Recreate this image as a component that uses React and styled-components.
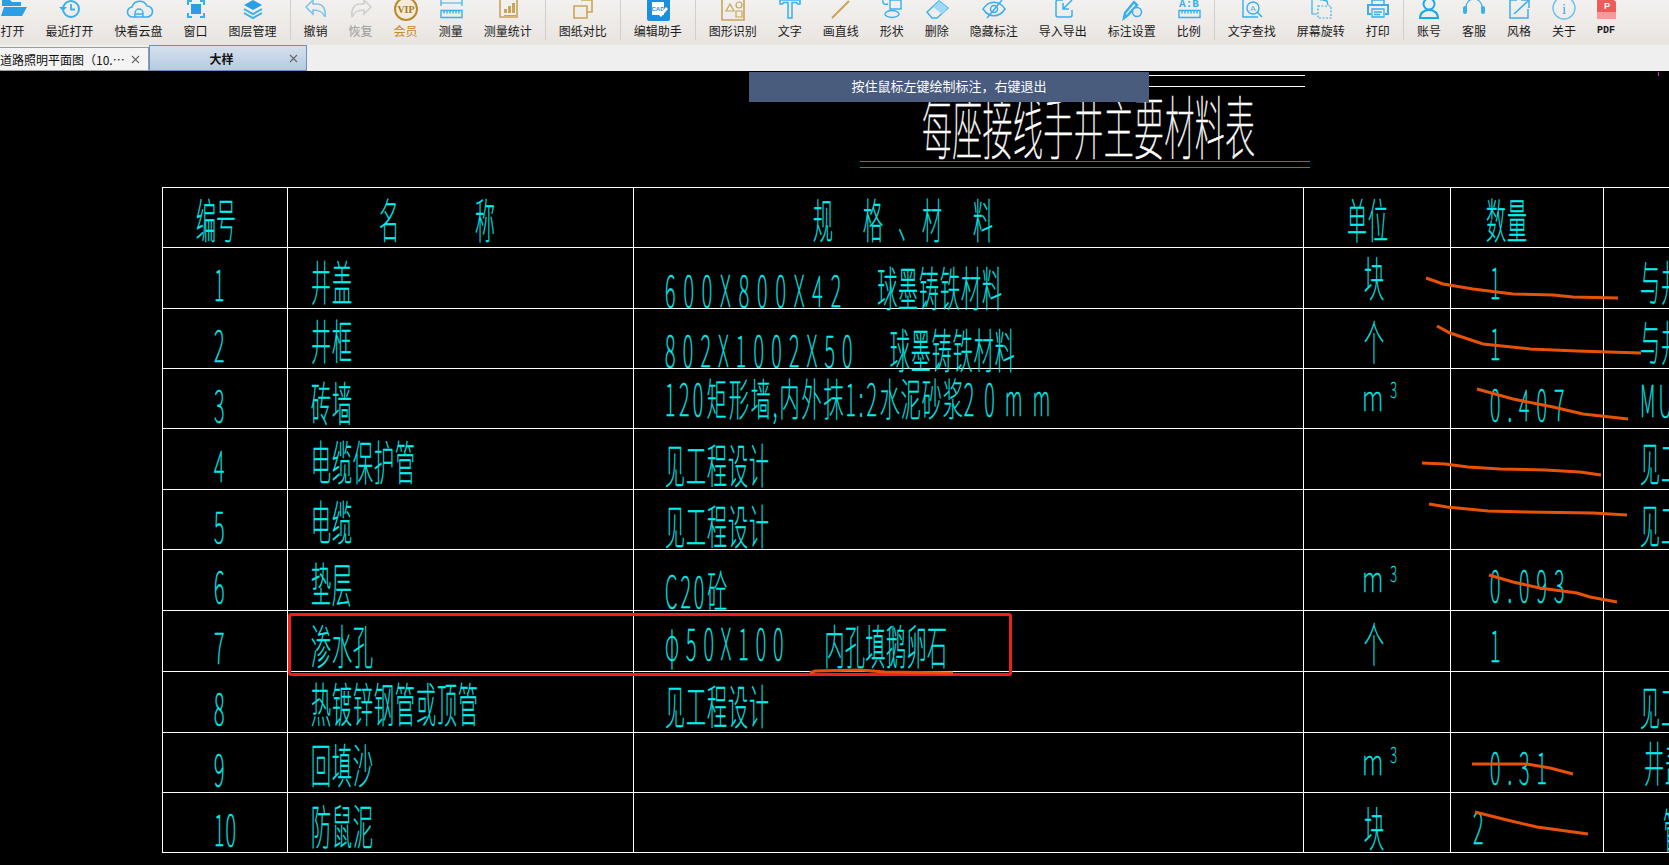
import styled, { createGlobalStyle } from "styled-components";

const BLUE = "#38b0ee";
const GOLD = "#c9a558";
const CJK = `"Noto Sans CJK SC", "Liberation Sans", sans-serif`;

const Global = createGlobalStyle`
  html, body { margin: 0; padding: 0; height: 100%; background: #000; overflow: hidden; }
  #root { height: 100%; }
`;

const Page = styled.div`
  display: flex;
  flex-direction: column;
  height: 865px;
  overflow: hidden;
  font-family: ${CJK};
`;

/* ---------- toolbar ---------- */
const Toolbar = styled.div`
  display: flex;
  flex: none;
  height: 45px;
  overflow: hidden;
  background: linear-gradient(#f3f1ef, #e8e4e0);
`;
const ToolRow = styled.div`
  display: flex;
  margin-left: -10px;
  height: 40px;
`;
const Tool = styled.div`
  display: flex;
  flex: none;
  flex-direction: column;
  align-items: center;
  padding: 0 10.5px;
`;
const ToolIcon = styled.svg`
  display: block;
  flex: none;
  width: 30px;
  height: 24px;
  margin: -3px -8px 0;
`;
const ToolLabel = styled.span`
  font-size: ${(p) => (p.$mono ? 10 : 12)}px;
  font-family: ${(p) => (p.$mono ? `"Liberation Mono", monospace` : "inherit")};
  font-weight: ${(p) => (p.$mono ? 700 : 400)};
  line-height: 14px;
  margin-top: 3px;
  white-space: nowrap;
  color: ${(p) => p.$color || "#1c1c1c"};
`;
const ToolSep = styled.div`
  flex: none;
  width: 1px;
  height: 40px;
  margin: 0 2px 0 3px;
  background: #d2cfcb;
`;

/* ---------- tabs ---------- */
const TabBar = styled.div`
  display: flex;
  flex: none;
  align-items: flex-end;
  height: 26px;
  background: #efefef;
`;
const Tab = styled.div`
  display: flex;
  align-items: center;
  box-sizing: border-box;
  width: ${(p) => (p.$active ? 158 : 149)}px;
  height: ${(p) => (p.$active ? 26 : 24)}px;
  padding: 0 8px 0 ${(p) => (p.$active ? 8 : 0)}px;
  font-size: 12px;
  white-space: nowrap;
  color: #111;
  background: ${(p) => (p.$active ? "linear-gradient(#d5e0ec, #b6cbe2)" : "#f4f4f4")};
  border: 1px solid ${(p) => (p.$active ? "#6a90c4" : "#9b9b9b")};
  border-left-width: ${(p) => (p.$active ? 1 : 0)}px;
`;
const TabTitle = styled.span`
  flex: 1;
  overflow: hidden;
  font-weight: ${(p) => (p.$active ? 700 : 400)};
  text-align: ${(p) => (p.$active ? "center" : "left")};
`;
const TabClose = styled.svg`
  flex: none;
  width: 9px;
  height: 9px;
  margin-left: 4px;
`;

/* ---------- drawing ---------- */
const Canvas = styled.div`
  position: relative;
  flex: 1;
  overflow: hidden;
  background: #000;
`;
const Heading = styled.div`
  display: flex;
  flex-direction: column;
  width: 450px;
  margin-left: 860px;
  padding-top: 4px;
`;
const Rule = styled.div`
  flex: none;
  height: 1px;
  margin-left: ${(p) => p.$x || 0}px;
  margin-right: ${(p) => p.$end || 0}px;
  margin-bottom: ${(p) => p.$after || 0}px;
  background: ${(p) => p.$color};
`;
const TitleBox = styled.div`
  height: 74px;
`;
const Line = styled.div`
  display: inline-block;
  flex: none;
  margin-left: ${(p) => p.$x || 0}px;
  margin-top: ${(p) => p.$y || 0}px;
  height: ${(p) => p.$size || 20}px;
  font-weight: 100;
  font-size: ${(p) => p.$size || 20}px;
  line-height: 1;
  white-space: pre;
  letter-spacing: ${(p) => p.$ls ?? 1}px;
  color: ${(p) => p.$color || "#00f0f0"};
  transform-origin: 0 0;
  transform: scaleY(${(p) => p.$sy || 2.35});
  -webkit-text-stroke: ${(p) => p.$thick ?? 0.25}px currentColor;
`;
const Run = styled.span`
  letter-spacing: ${(p) => p.$ls}px;
`;
const Sheet = styled.div`
  display: grid;
  grid-template-columns: 125px 346px 670px 147px 153px 66px;
  grid-template-rows: 60px 61px 60px 60px 61px 60px 61px 61px 61px 60px 60px;
  width: 1507px;
  margin-left: 162px;
  border-top: 1px solid #fff;
  border-left: 1px solid #fff;
  box-sizing: border-box;
`;
const Cell = styled.div`
  display: flex;
  align-items: flex-start;
  min-width: 0;
  box-sizing: border-box;
  border-right: 1px solid #fff;
  border-bottom: 1px solid #fff;
`;
const Banner = styled.div`
  position: absolute;
  top: 1px;
  left: 749px;
  width: 400px;
  height: 30px;
  display: flex;
  align-items: center;
  justify-content: center;
  padding-bottom: 3px;
  box-sizing: border-box;
  font-size: 13px;
  color: #fff;
  background: #495c7e;
`;
const Highlight = styled.div`
  position: absolute;
  left: 288px;
  top: 542px;
  width: 724px;
  height: 63px;
  box-sizing: border-box;
  border: 3px solid #ee1f1c;
  border-radius: 3px;
`;
const Marks = styled.svg`
  position: absolute;
  left: 0;
  top: 0;
  width: 1669px;
  height: 794px;
`;
const Tick = styled.div`
  position: absolute;
  top: 1px;
  left: 1658px;
  width: 1px;
  height: 4px;
  background: #e020c8;
`;

function Stroked({ d, w = 2 }) {
  return <path d={d} fill="none" stroke={BLUE} strokeWidth={w} />;
}
function Gold({ d, w = 1.6 }) {
  return <path d={d} fill="none" stroke={GOLD} strokeWidth={w} />;
}

const ICONS = {
  open: (
    <>
      <path d="M4 3h8l2 2h9v4H4z" fill="#2a9fe6" />
      <path d="M6 10h23l-5 9H3z" fill="#2a9fe6" />
    </>
  ),
  recent: (
    <>
      <circle cx="16" cy="12" r="8" fill="none" stroke={BLUE} strokeWidth="2" />
      <path d="M16 7v5.5h4" fill="none" stroke={BLUE} strokeWidth="1.8" />
      <path d="M4 10h8l-4 4z" fill={BLUE} />
    </>
  ),
  cloud: (
    <>
      <Stroked w={1.6} d="M9 20a5 5 0 0 1-1-10a8 8 0 0 1 15-1a5.500 5.500 0 0 1 0 11z" />
      <Stroked w={1.4} d="M11 20v-4a4 4 0 0 1 8 0v4M11 17h8" />
    </>
  ),
  window: (
    <>
      <Stroked d="M7 8V4h4M19 4h4v4M23 16v4h-4M11 20H7v-4" />
      <rect x="10" y="7" width="10" height="10" fill="#2a9fe6" />
    </>
  ),
  layers: (
    <>
      <path d="M15 3l9 5-9 5-9-5z" fill="#2a9fe6" />
      <Stroked d="M6 12l9 5 9-5M6 16l9 5 9-5" />
    </>
  ),
  undo: <path d="M5 10l7-7v4h4c6 0 9 5 8 13-2-5-5-7-12-7v4z" fill="none" stroke="#7cc5ec" strokeWidth="1.6" />,
  redo: <path d="M25 10l-7-7v4h-4c-6 0-9 5-8 13 2-5 5-7 12-7v4z" fill="none" stroke="#cfcfcf" strokeWidth="1.6" />,
  vip: (
    <>
      <circle cx="15" cy="12" r="11" fill="#f4ecd9" stroke="#b98a32" strokeWidth="2" />
      <text x="15" y="16" textAnchor="middle" fontFamily="Liberation Serif" fontWeight="700" fontSize="10" fill="#a8781f">VIP</text>
    </>
  ),
  ruler: (
    <>
      <Stroked w={1.2} d="M5 3v6M26 3v6M5 6h21" />
      <Stroked w={1.4} d="M5 13.500h21v7H5zM8 13.500v3M11 13.500v3M14 13.500v3M17 13.500v3M20 13.500v3M23 13.500v3" />
    </>
  ),
  stats: (
    <>
      <Gold d="M7 0v20h17V0" />
      <path d="M11 16h3v-4h-3zM15 16h3V9h-3zM19 16h3V6h-3z" fill={GOLD} />
      <Gold w={1} d="M11 18.500h12" />
    </>
  ),
  compare: (
    <>
      <Gold d="M13 3h11v12H19" />
      <Gold d="M6 9h13v12H6z" />
    </>
  ),
  helper: (
    <>
      <rect x="4" y="0" width="23" height="24" rx="2" fill="#1c8fdc" />
      <rect x="9" y="5" width="12" height="13" fill="#fff" />
      <text x="15" y="14" textAnchor="middle" fontFamily="Liberation Sans" fontWeight="700" fontSize="6" fill="#1c8fdc">CAD</text>
      <path d="M16 18l7-8 2 2-7 8z" fill="#fff" />
    </>
  ),
  shapes: (
    <>
      <Gold d="M4 0h22v23H4z" />
      <path d="M8 14l4-7 4 7z" fill="none" stroke={GOLD} strokeWidth="1.2" />
      <circle cx="21" cy="8" r="3" fill="none" stroke={GOLD} strokeWidth="1.2" />
      <path d="M18 14h6v6h-6z" fill="none" stroke={GOLD} strokeWidth="1.2" />
    </>
  ),
  text: <Stroked w={1.5} d="M5 3h20v4h-2.500l-1-1.500H17V21h-4V5.500H8.500L7.500 7H5z" />,
  line: <path d="M6 21L23 4" stroke={GOLD} strokeWidth="2" />,
  shape: (
    <>
      <Stroked w={1.4} d="M13 3h11v9H13z" />
      <Stroked w={1.4} d="M6 3c-1 4 2 5 5 4" />
      <ellipse cx="15" cy="17" rx="7" ry="3.500" fill="none" stroke={BLUE} strokeWidth="1.4" />
    </>
  ),
  erase: (
    <>
      <Stroked w={1.4} d="M5 15L17 4l9 7-11 10h-5z" />
      <path d="M11 10l6-6 9 7-6 6z" fill="#9fd8f6" />
    </>
  ),
  hide: (
    <>
      <Stroked w={1.5} d="M4 12c6-9 16-9 22 0-6 9-16 9-22 0z" />
      <circle cx="15" cy="12" r="3.500" fill="none" stroke={BLUE} strokeWidth="1.5" />
      <Stroked w={1.5} d="M8 21L23 3" />
    </>
  ),
  io: (
    <>
      <Stroked w={1.5} d="M15 3H10a2 2 0 0 0-2 2v13a2 2 0 0 0 2 2h12a2 2 0 0 0 2-2v-5" />
      <Stroked w={1.5} d="M24 3l-9 9M15 6v6h6" />
    </>
  ),
  setting: (
    <>
      <Stroked w={2.5} d="M7 21l1-5 9-11 3 3-9 10z" />
      <circle cx="20" cy="15" r="4.500" fill="#eeeae7" stroke={BLUE} strokeWidth="1.500" />
    </>
  ),
  scale: (
    <>
      <text x="15" y="10" textAnchor="middle" fontFamily="Liberation Mono" fontWeight="700" fontSize="11" fill={BLUE}>A:B</text>
      <Stroked w={1.4} d="M5 13.500h21v7H5zM8 13.500v3M11 13.500v3M14 13.500v3M17 13.500v3M20 13.500v3M23 13.500v3" />
    </>
  ),
  find: (
    <>
      <Stroked w={1.4} d="M6 3v17h15" />
      <circle cx="16" cy="11" r="6" fill="none" stroke={BLUE} strokeWidth="1.400" />
      <text x="16" y="14" textAnchor="middle" fontFamily="Liberation Sans" fontSize="8" fill={BLUE}>A</text>
      <Stroked w={1.6} d="M20 15l5 5" />
    </>
  ),
  rotate: (
    <>
      <Stroked w={1.2} d="M6 3v14h5M14 3l4 0" />
      <path d="M12 9h13v12H12z" fill="none" stroke={BLUE} strokeWidth="1.200" strokeDasharray="2 1.500" />
      <Stroked w={1.4} d="M17 3l4 1 1 4" />
    </>
  ),
  print: (
    <>
      <Stroked w={1.5} d="M9 8V3h12v5" />
      <Stroked w={2} d="M8 17H5V8h20v9h-3" />
      <Stroked w={1.3} d="M9 12h12v8H9zM11 15h8M11 17.500h6" />
    </>
  ),
  account: (
    <>
      <circle cx="15" cy="7" r="5.500" fill="none" stroke="#10aeee" strokeWidth="2" />
      <path d="M6 21c0-5 4-8 9-8s9 3 9 8z" fill="none" stroke="#10aeee" strokeWidth="2" />
    </>
  ),
  service: (
    <>
      <Stroked w={1.2} d="M7 12V10a8 8 0 0 1 16 0v2" />
      <rect x="4" y="9" width="4" height="8" rx="2" fill={BLUE} />
      <rect x="22" y="9" width="4" height="8" rx="2" fill={BLUE} />
    </>
  ),
  style: (
    <>
      <Stroked w={1.500} d="M13 3H6v18h18v-9" />
      <Stroked w={1.500} d="M10 17L24 4M17 3h8v8" />
    </>
  ),
  about: (
    <>
      <circle cx="15" cy="11" r="11" fill="none" stroke="#6cc2ee" strokeWidth="1.4" />
      <text x="15" y="17" textAnchor="middle" fontFamily="Liberation Serif" fontSize="15" fill="#3da8e4">i</text>
    </>
  ),
  pdf: (
    <>
      <path d="M6 0h14l5 5v17H6z" fill="#ef5a5a" />
      <path d="M6 15h19v7H6z" fill="#f49a9a" />
      <text x="13" y="12" fontFamily="Liberation Sans" fontWeight="700" fontSize="9" fill="#fff">P</text>
    </>
  ),
};

const TOOLS = [
  ["打开", "open"], ["最近打开", "recent"], ["快看云盘", "cloud"], ["窗口", "window"], ["图层管理", "layers"], null,
  ["撤销", "undo"], ["恢复", "redo", "#9a9a9a"], ["会员", "vip", "#c88a2a"], ["测量", "ruler"], ["测量统计", "stats"], null,
  ["图纸对比", "compare"], null,
  ["编辑助手", "helper"], null,
  ["图形识别", "shapes"], ["文字", "text"], ["画直线", "line"], ["形状", "shape"], ["删除", "erase"], ["隐藏标注", "hide"], ["导入导出", "io"], ["标注设置", "setting"], ["比例", "scale"], null,
  ["文字查找", "find"], ["屏幕旋转", "rotate"], ["打印", "print"], null,
  ["账号", "account"], ["客服", "service"], ["风格", "style"], ["关于", "about"],
];

function CloseX() {
  return (
    <TabClose viewBox="0 0 9 9">
      <path d="M1 1l7 7M8 1L1 8" stroke="#666" strokeWidth="1.1" />
    </TabClose>
  );
}

// chinese text: taller stretch
const Text = ({ x, y, ls, children, ...rest }) => (
  <Line $x={x} $y={y - 3} $ls={ls} {...rest}>{children}</Line>
);
// digits and latin: shorter stretch
const Num = ({ x, y, ls, children }) => (
  <Line $x={x} $y={y - 3} $ls={ls} $sy={2.2}>{children}</Line>
);

const Cube = ({ top = 12 }) => (
  <>
    <Line $x={58} $y={9} $size={24} $sy={1.5} $ls={0}>m</Line>
    <Line $x={7} $y={top - 3} $size={13} $sy={1.7} $ls={0} $thick={0.15}>3</Line>
  </>
);

const ROWS = [
  { no: "1", name: "井盖", nameY: 13, unit: <Text x={60} y={9}>块</Text>, qty: <Num x={39} y={14}>1</Num>, last: <Text x={36} y={13}>与井盖</Text>,
    spec: <><Num x={31} y={22} ls={8}>600X800X42</Num><Text x={28} y={19}>球墨铸铁材料</Text></> },
  { no: "2", name: "井框", nameY: 11, unit: <Text x={60} y={12}>个</Text>, qty: <Num x={39} y={14}>1</Num>, last: <Text x={36} y={12}>与井框</Text>,
    spec: <><Num x={31} y={21} ls={7.3}>802X1002X50</Num><Text x={30} y={20}>球墨铸铁材料</Text></> },
  { no: "3", name: "砖墙", nameY: 13, unit: <Cube top={12} />, qty: <Num x={39} y={15} ls={7}>0.407</Num>, last: <Num x={36} y={11} ls={3}>MU10</Num>,
    spec: <Line $x={31} $y={7} $sy={2.2} $ls={3.5}>120<Run $ls={2}>矩形墙,内外抹</Run><Run $ls={3}>1:2</Run><Run $ls={1}>水泥砂浆</Run><Run $ls={10}>20mm</Run></Line> },
  { no: "4", name: "电缆保护管", nameY: 12, spec: <Text x={31} y={15}>见工程设计</Text>, last: <Text x={36} y={13}>见工程设计</Text> },
  { no: "5", name: "电缆", nameY: 11, spec: <Text x={31} y={15}>见工程设计</Text>, last: <Text x={36} y={14}>见工程设计</Text> },
  { no: "6", name: "垫层", nameY: 13, unit: <Cube top={15} />, qty: <Num x={39} y={15} ls={7}>0.093</Num>,
    spec: <Line $x={31} $y={18} $sy={2.2} $ls={3}>C20<Run $ls={1}>砼</Run></Line> },
  { no: "7", name: "渗水孔", nameY: 14, unit: <Text x={60} y={12}>个</Text>, qty: <Num x={39} y={14}>1</Num>,
    spec: <><Num x={31} y={12} ls={7}>φ50X100</Num><Text x={34} y={14} ls={0.5}>内孔填鹅卵石</Text></> },
  { no: "8", name: "热镀锌钢管或顶管", nameY: 11, spec: <Text x={31} y={13}>见工程设计</Text>, last: <Text x={36} y={14}>见工程设计</Text> },
  { no: "9", name: "回填沙", nameY: 11, unit: <Cube top={13} />, qty: <Num x={39} y={14} ls={7}>0.31</Num>, last: <Text x={40} y={9}>井盖</Text> },
  { no: "10", name: "防鼠泥", nameY: 12, unit: <Text x={60} y={14}>块</Text>, qty: <Num x={22} y={14}>2</Num>, last: <Text x={59} y={16}>管</Text> },
];

const STROKES = [
  "1426,278 1443,284 1473,289 1513,294 1553,295 1573,297 1618,298",
  "1437,326 1450,333 1483,344 1530,349 1577,351 1641,353",
  "1477,389 1513,399 1553,407 1583,414 1628,419",
  "1422,463 1445,464 1468,467 1500,469 1545,470 1580,472 1601,475",
  "1429,504 1447,507 1488,511 1527,512 1593,513 1627,515",
  "1489,575 1513,582 1540,588 1577,593 1590,597 1617,602",
  "1472,764 1527,764 1550,768 1573,774",
  "1475,812 1507,820 1537,827 1588,834",
  "810,673 815,671 860,670 885,672 953,673",
];

export default function App() {
  return (
    <Page>
      <Global />
      <Toolbar>
        <ToolRow>
          {TOOLS.map((tool, i) =>
            tool ? (
              <Tool key={i}>
                <ToolIcon viewBox="0 0 30 24">{ICONS[tool[1]]}</ToolIcon>
                <ToolLabel $color={tool[2]}>{tool[0]}</ToolLabel>
              </Tool>
            ) : (
              <ToolSep key={i} />
            )
          )}
          <Tool>
            <ToolIcon viewBox="0 0 30 24">{ICONS.pdf}</ToolIcon>
            <ToolLabel $mono>PDF</ToolLabel>
          </Tool>
        </ToolRow>
      </Toolbar>
      <TabBar>
        <Tab>
          <TabTitle>道路照明平面图（10.…</TabTitle>
          <CloseX />
        </Tab>
        <Tab $active>
          <TabTitle $active>大样</TabTitle>
          <CloseX />
        </Tab>
      </TabBar>
      <Canvas>
        <Heading>
          <Rule $x={140} $end={5} $after={10} $color="#fff" />
          <Rule $x={140} $end={5} $color="#fff" />
          <TitleBox>
            <Line $x={62} $y={3} $size={30} $sy={2.3} $ls={0.3} $color="#fff" $thick={0.3}>每座接线手井主要材料表</Line>
          </TitleBox>
          <Rule $after={5} $color="#f03a10" />
          <Rule $after={19} $color="#f03a10" />
        </Heading>
        <Sheet>
          <Cell><Text x={33} y={11} ls={0}>编号</Text></Cell>
          <Cell><Text x={91} y={11}>名</Text><Text x={75} y={11}>称</Text></Cell>
          <Cell>
            <Text x={179} y={11} ls={30}>规格</Text>
            <Text x={-15} y={11} ls={4}>、</Text>
            <Text y={11} ls={31}>材料</Text>
          </Cell>
          <Cell><Text x={43} y={11}>单位</Text></Cell>
          <Cell><Text x={35} y={11}>数量</Text></Cell>
          <Cell />
          {ROWS.map((row) => [
            <Cell key={row.no + "a"}><Num x={51} y={16}>{row.no}</Num></Cell>,
            <Cell key={row.no + "b"}><Text x={23} y={row.nameY}>{row.name}</Text></Cell>,
            <Cell key={row.no + "c"}>{row.spec}</Cell>,
            <Cell key={row.no + "d"}>{row.unit}</Cell>,
            <Cell key={row.no + "e"}>{row.qty}</Cell>,
            <Cell key={row.no + "f"}>{row.last}</Cell>,
          ])}
        </Sheet>
        <Highlight />
        <Marks viewBox="0 71 1669 794">
          {STROKES.map((pts) => (
            <polyline key={pts} points={pts} fill="none" stroke="#e65208" strokeWidth="3" />
          ))}
        </Marks>
        <Banner>按住鼠标左键绘制标注，右键退出</Banner>
        <Tick />
      </Canvas>
    </Page>
  );
}
